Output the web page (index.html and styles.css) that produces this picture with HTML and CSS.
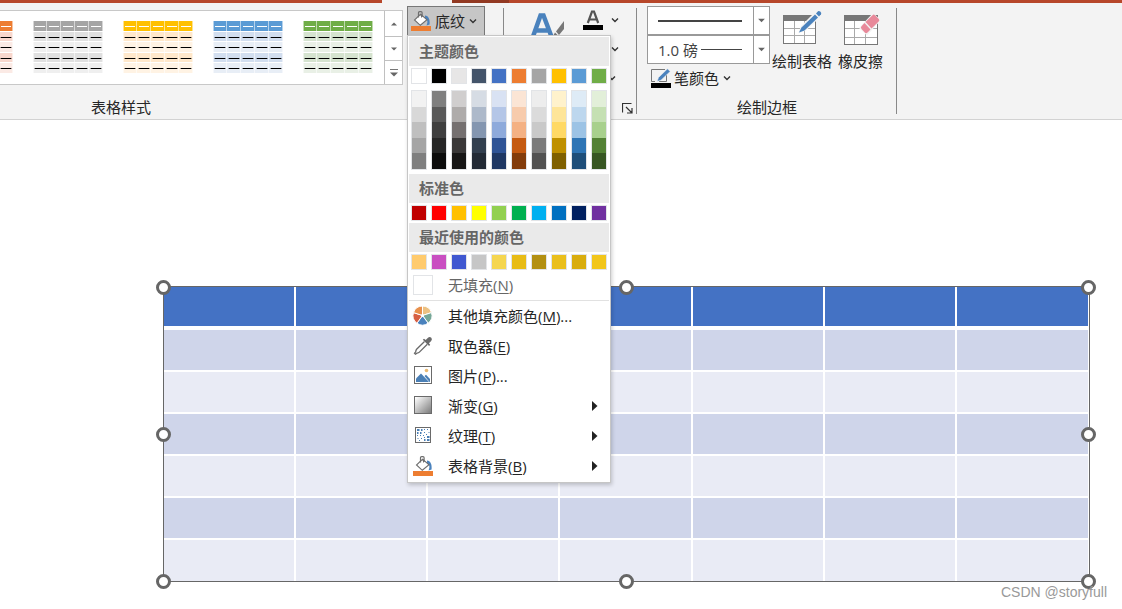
FILE: index.html
```html
<!DOCTYPE html>
<html lang="zh-CN">
<head>
<meta charset="utf-8">
<title>表格设计</title>
<link rel="stylesheet" href="styles.css">
</head>
<body>
<svg class="defs" aria-hidden="true">
  <symbol id="thumb" viewBox="0 0 70 52">
    <rect class="t-head" width="70" height="10"/>
    <g class="t-band"><rect y="11" width="70" height="9"/><rect y="32" width="70" height="9"/></g>
    <g class="t-band t-light"><rect y="21" width="70" height="10"/><rect y="42" width="70" height="10"/></g>
    <path d="M.5 0V52M13.500 0V52M27.500 0V52M41.500 0V52M55.500 0V52M69.500 0V52" stroke="#fff" stroke-opacity=".55"/>
    <path d="M2 5.500H70" stroke="#fff" stroke-dasharray="10 4"/>
    <path d="M1 16.500H70M1 26.500H70M1 37.500H70M1 47.500H70" stroke="#000" stroke-opacity=".35" stroke-dasharray="12 2"/>
    <path d="M2 16.500H70M2 26.500H70M2 37.500H70M2 47.500H70" stroke="#000" stroke-dasharray="10 4"/>
  </symbol>
  <symbol id="chevron" viewBox="0 0 10 10"><path d="M2 3.500 5 6.500 8 3.500" fill="none" stroke="#333" stroke-width="1.400"/></symbol>
  <symbol id="bucket" viewBox="0 0 20 20">
    <path d="M14 4.500C17.500 5 19 8 18.600 13.500L15.500 14.500C17.200 11 16.500 8.500 14 7Z" fill="#4a82bd"/>
    <path d="M9.500 3.200 16 8.800 9.300 14.300 3.500 9Z" fill="#fff" stroke="#6e6e6e" stroke-width="1.100"/>
    <path d="M7.500 6.500V1.800Q7.500.7 8.600.7H10Q11.100.7 11.100 1.800V6" fill="none" stroke="#6e6e6e" stroke-width="1.200"/>
    <path d="M8.500 4.600 10.500 3.600V6.500" fill="none" stroke="#6e6e6e"/>
    <rect y="15" width="20" height="5" fill="#ed7d31"/>
  </symbol>
</svg>

<div class="tabstrip"><span class="tab-left"></span><span class="tab-active"></span><span class="tab-right"></span></div>

<header class="ribbon">
  <section class="group group-styles">
    <div class="gallery">
      <div class="thumbs">
        <button class="thumb orange" aria-label="样式 橙色"><svg><use href="#thumb"/></svg></button>
        <button class="thumb gray" aria-label="样式 灰色"><svg><use href="#thumb"/></svg></button>
        <button class="thumb gold" aria-label="样式 金色"><svg><use href="#thumb"/></svg></button>
        <button class="thumb blue" aria-label="样式 蓝色"><svg><use href="#thumb"/></svg></button>
        <button class="thumb green" aria-label="样式 绿色"><svg><use href="#thumb"/></svg></button>
      </div>
      <div class="spinner">
        <button aria-label="上一行"><svg viewBox="0 0 8 8"><path d="M1 5.500 4 2.500 7 5.500Z" fill="#666"/></svg></button>
        <button aria-label="下一行"><svg viewBox="0 0 8 8"><path d="M1 2.500 4 5.500 7 2.500Z" fill="#666"/></svg></button>
        <button aria-label="其他"><svg viewBox="0 0 8 8"><path d="M0 .5H8" stroke="#777"/><path d="M0 3.500H8L4 7.500Z" fill="#666"/></svg></button>
      </div>
    </div>
    <h2 class="group-label">表格样式</h2>
  </section>

  <section class="group group-shading">
    <div class="dropdown">
      <button class="shading-btn" aria-haspopup="menu" aria-expanded="true">
        <svg class="icon"><use href="#bucket"/></svg><span>底纹</span><svg class="chev"><use href="#chevron"/></svg>
      </button>
      <div class="menu">
        <h3>主题颜色</h3>
        <div class="swatches" data-set="theme"></div>
        <div class="swatches tints" data-set="tints"></div>
        <h3>标准色</h3>
        <div class="swatches" data-set="standard"></div>
        <h3>最近使用的颜色</h3>
        <div class="swatches recent" data-set="recent"></div>
        <button class="item nofill"><span class="nofill-box"></span><span>无填充(<u>N</u>)</span></button>
        <button class="item">
          <svg class="icon" viewBox="0 0 20 20">
            <g stroke="#fff" stroke-width="1">
              <path d="M9.500 9.500V0A9.500 9.500 0 0 1 18.500 6.600Z" fill="#ecc182"/>
              <path d="M9.500 9.500 18.500 6.600A9.500 9.500 0 0 1 15.100 17.200Z" fill="#76a797"/>
              <path d="M9.500 9.500 15.100 17.200A9.500 9.500 0 0 1 3.900 17.200Z" fill="#4a82bd"/>
              <path d="M9.500 9.500 3.900 17.200A9.500 9.500 0 0 1 .5 6.600Z" fill="#d65f43"/>
              <path d="M9.500 9.500 .5 6.600A9.500 9.500 0 0 1 9.500 0Z" fill="#e8904c"/>
            </g>
            <circle cx="9.500" cy="9.500" r="1.500" fill="#fff"/>
          </svg><span>其他填充颜色(<u>M</u>)...</span></button>
        <button class="item">
          <svg class="icon" viewBox="0 0 20 20">
            <path d="M11.500 5.500 3.600 13.300Q2.800 14.200 2.700 15.800L1.500 17.300 2.400 18.200 4 17.200Q5.600 17 6.400 16.100L14.300 8.200" fill="#fff" stroke="#6a6a6a" stroke-width="1.300"/>
            <path d="M9.800 3.800 11 2.700 12.700 4 15 1.700Q16.800.3 18.300 1.800 19.600 3.300 18.200 5L15.900 7.200 17.200 8.800 16.100 10Z" fill="#6a6a6a"/>
          </svg><span>取色器(<u>E</u>)</span></button>
        <button class="item">
          <svg class="icon" viewBox="0 0 20 20">
            <rect x="1.500" y=".5" width="17" height="17" fill="#fff" stroke="#6a6a6a"/>
            <circle cx="13.500" cy="4.500" r="1.800" fill="#e9b973"/>
            <path d="M3 16V12.500L8 7.500 16 16Z" fill="#4a7fb5"/><path d="M11.500 10 13 8.700 17 13V16H16.500Z" fill="#4a7fb5"/>
          </svg><span>图片(<u>P</u>)...</span></button>
        <button class="item">
          <svg class="icon" viewBox="0 0 20 20">
            <defs><linearGradient id="gr" x2="1" y2="1"><stop offset=".05" stop-color="#fff"/><stop offset="1" stop-color="#777"/></linearGradient></defs>
            <rect x="1.500" y=".5" width="17" height="17" fill="url(#gr)" stroke="#6a6a6a"/>
          </svg><span>渐变(<u>G</u>)</span><svg class="arrow" viewBox="0 0 6 10"><path d="M0 0 5.500 5 0 10Z"/></svg></button>
        <button class="item">
          <svg class="icon" viewBox="0 0 20 20">
            <g transform="translate(0 -1)">
            <rect x="2.500" y="2.500" width="15" height="15" fill="#fff" stroke="#6a6a6a"/>
            <path d="M4 5H6.500M8 5H9.500M4 8H5.500M7 8H8.500M11 15H12.500M14 15H16.500M14 12H16.500" stroke="#4a7fb5" stroke-width="2"/>
            <path d="M11 4.500H12M14 4.500H15M11 7.500H12M15.500 7.500H16.500M4 10.500H5M7 10.500H8M10 10.500H11M13 9.500H14M4.500 13.500H5.500M8 13.500H9M11 12.500H12M6 15.500H7" stroke="#4a7fb5"/>
            </g>
          </svg><span>纹理(<u>T</u>)</span><svg class="arrow" viewBox="0 0 6 10"><path d="M0 0 5.500 5 0 10Z"/></svg></button>
        <button class="item"><svg class="icon"><use href="#bucket"/></svg><span>表格背景(<u>B</u>)</span><svg class="arrow" viewBox="0 0 6 10"><path d="M0 0 5.500 5 0 10Z"/></svg></button>
      </div>
    </div>
  </section>

  <section class="group group-wordart">
    <div class="wordart-row">
      <button class="quick" aria-label="快速样式">
        <svg viewBox="0 0 36 30">
          <path d="M2.500 26 10.500 3.500H13.500L22 26M6 18.500H18" fill="none" stroke="#4a82bd" stroke-width="4.500"/>
          <path d="M34 9V17L29 23 26 19.500Z" fill="#777"/><path d="M25 20.500 28.500 24Q26 28 20 27.500 23 25 25 20.500Z" fill="#777"/>
        </svg>
      </button>
      <div class="text-tools">
        <button aria-label="文本填充">
          <svg class="icon" viewBox="0 0 20 20"><path d="M4.800 13 9 1.500H11L15.200 13M6.500 9.500H13.500" fill="none" stroke="#555" stroke-width="2.200"/><rect y="15" width="20" height="5" fill="#000"/></svg>
          <svg class="chev"><use href="#chevron"/></svg>
        </button>
        <button aria-label="文本轮廓"><span class="icon"></span><svg class="chev"><use href="#chevron"/></svg></button>
        <button aria-label="文字效果"><span class="icon narrow"></span><svg class="chev"><use href="#chevron"/></svg></button>
      </div>
    </div>
    <button class="launcher" aria-label="更多选项"><svg viewBox="0 0 11 11"><path d="M.5 9.500V.5H9.500M4 4 9.500 9.500M10 5V10H5" fill="none" stroke="#333" stroke-width="1.200"/></svg></button>
  </section>

  <section class="group group-borders">
    <div class="border-tools">
      <div class="pens">
        <div class="combo">
          <select aria-label="笔样式"><option aria-label="实线"></option></select>
          <span class="pen-line thick"></span>
          <svg class="combo-arrow" viewBox="0 0 8 8"><path d="M1 2.500H7L4 5.500Z"/></svg>
        </div>
        <div class="combo">
          <select aria-label="笔划粗细"><option>1.0 磅</option></select>
          <span class="pen-line thin"></span>
          <svg class="combo-arrow" viewBox="0 0 8 8"><path d="M1 2.500H7L4 5.500Z"/></svg>
        </div>
        <button class="pen-color">
          <svg class="icon" viewBox="0 0 20 20"><path d="M14 1.500H.5V13.500H4M15.500 7V13.500H8" fill="none" stroke="#777"/><path d="M6 13.500 7.500 9.500 16.500.8 19.200 3.500 10 12.200Z" fill="#4a82bd" stroke="#f3f3f3" stroke-width=".6"/><rect y="15" width="20" height="5" fill="#000"/></svg>
          <span>笔颜色</span><svg class="chev"><use href="#chevron"/></svg>
        </button>
      </div>
      <button class="big">
        <svg viewBox="0 0 40 36">
          <rect x="1.500" y="5.500" width="32" height="28" fill="#fff" stroke="#777"/><rect x="1" y="5" width="33" height="6" fill="#777"/>
          <path d="M12.500 11V33M22.500 11V33M2 18.500H33M2 25.500H33" stroke="#aaa"/>
          <path d="M16 23.500 19 16 34.500.5 40 5.500 24 20.500Z" fill="#f3f3f3"/>
          <path d="M17 22.500 19.500 17.500 33 4.500 36 7.500 22.500 20.500Z" fill="#4a82bd"/><path d="M34 3.500 36 1.200Q37 .4 38.500 1.700 39.800 3 39 4.200L37 6.500Z" fill="#4a82bd"/>
        </svg><span>绘制表格</span>
      </button>
      <button class="big">
        <svg viewBox="0 0 40 36">
          <rect x="3.500" y="5.500" width="33" height="29" fill="#fff" stroke="#777"/><rect x="3" y="5" width="34" height="6" fill="#777"/>
          <path d="M13.500 11V34M24.500 11V34M4 18.500H36M4 27.500H36" stroke="#aaa"/>
          <path d="M18 18 32 3 40 10 26 25.500Z" fill="#f3f3f3"/>
          <path d="M24.500 12 31.500 5.200Q32.800 4 34 5.200L37.800 9Q39 10.200 37.700 11.500L30.500 18.500Z" fill="#e8899a"/>
          <path d="M23.500 13 29.500 19.500 26.500 22.500Q25 23.800 23.800 22.500L20.500 19Q19.300 17.500 20.500 16.200Z" fill="#e8899a"/>
        </svg><span>橡皮擦</span>
      </button>
    </div>
    <h2 class="group-label">绘制边框</h2>
  </section>
</header>

<main class="canvas">
  <div class="selection">
    <table class="slide-table" aria-label="表格">
      <thead><tr><th></th><th></th><th></th><th></th><th></th><th></th><th></th></tr></thead>
      <tbody>
        <tr><td></td><td></td><td></td><td></td><td></td><td></td><td></td></tr>
        <tr><td></td><td></td><td></td><td></td><td></td><td></td><td></td></tr>
        <tr><td></td><td></td><td></td><td></td><td></td><td></td><td></td></tr>
        <tr><td></td><td></td><td></td><td></td><td></td><td></td><td></td></tr>
        <tr><td></td><td></td><td></td><td></td><td></td><td></td><td></td></tr>
        <tr><td></td><td></td><td></td><td></td><td></td><td></td><td></td></tr>
      </tbody>
    </table>
    <i class="handle top left"></i><i class="handle top center"></i><i class="handle top right"></i>
    <i class="handle middle left"></i><i class="handle middle right"></i>
    <i class="handle bottom left"></i><i class="handle bottom center"></i><i class="handle bottom right"></i>
  </div>
  <p class="watermark">CSDN @storyfull</p>
</main>
<script src="swatches.js"></script>
</body>
</html>
```
FILE: styles.css
```css
* { box-sizing: border-box; }

body {
  margin: 0;
  min-height: 100vh;
  display: flex;
  flex-direction: column;
  background: #fff;
  color: #262626;
  font: 15px/20px "Open Sans", "Noto Sans CJK SC", sans-serif;
}

button {
  margin: 0;
  padding: 0;
  border: 0;
  background: none;
  color: inherit;
  font: inherit;
  text-align: left;
}

svg { display: block; }
h2, h3, p { margin: 0; font: inherit; }
.defs { position: absolute; width: 0; height: 0; }
.icon { flex: none; width: 20px; height: 20px; overflow: visible; }
.chev { flex: none; width: 10px; height: 10px; }

/* Title strip */
.tabstrip { display: flex; height: 3px; background: #f3f3f3; }
.tab-left { width: 382px; margin-right: 70px; background: #b7472a; }
.tab-active { width: 57px; background: #923922; }
.tab-right { flex: 1; background: #b7472a; }

/* Ribbon */
.ribbon {
  display: flex;
  height: 117px;
  background: #f3f3f3;
  border-bottom: 1px solid #d2d2d2;
}
.group { display: flex; flex-direction: column; justify-content: space-between; padding-bottom: 2px; }
.group-label { text-align: center; white-space: nowrap; }

.group-styles { width: 404px; padding-top: 7px; }
.group-styles .group-label { padding-left: 91px; text-align: left; }
.gallery { display: flex; height: 75px; margin-right: 1px; background: #fff; border: 1px solid #c8c8c8; border-left: 0; }
.thumbs { flex: 1; display: flex; justify-content: flex-end; align-items: flex-start; gap: 20px; padding: 10px 11px 0 0; overflow: hidden; }
.thumb { flex: none; }
.thumb svg { width: 70px; height: 52px; }
.t-head { fill: var(--head); }
.t-band { fill: var(--band); }
.t-light { opacity: .5; }
.orange { --head: #ed7d31; --band: #f8d7cd; }
.gray { --head: #a5a5a5; --band: #e0e0e0; }
.gold { --head: #ffc000; --band: #ffe8cb; }
.blue { --head: #5b9bd5; --band: #d2deef; }
.green { --head: #70ad47; --band: #d5e3cf; }
.spinner { display: grid; grid-template-rows: 25px 24px 1fr; width: 18px; border-left: 1px solid #c0c0c0; }
.spinner button { display: grid; place-items: center; }
.spinner button + button { border-top: 1px solid #c0c0c0; }
.spinner svg { width: 8px; height: 8px; }

.group-shading { width: 99px; padding: 3px 0 0 3px; }
.dropdown { position: relative; align-self: flex-start; }
.shading-btn { display: flex; align-items: center; height: 30px; padding: 0 6px 0 3px; background: #c6c6c6; border: 1px solid #777; }
.shading-btn span { margin: 0 3px 0 4px; }

/* Shading menu */
.menu {
  position: absolute;
  z-index: 2;
  top: 29px;
  left: 0;
  width: 204px;
  padding: 1px;
  background: #fff;
  border: 1px solid #c6c6c6;
  box-shadow: 1px 2px 4px rgba(0, 0, 0, .2);
}
.menu h3 { padding-left: 10px; background: #eaeaea; color: #666; font-weight: 700; line-height: 29px; }
.swatches { display: grid; grid-template-columns: repeat(10, 16px); gap: 4px; padding: 2px; }
.swatch { height: 16px; border: 1px solid #e2e4e7; }
.tints { padding: 4px 2px; }
.recent { padding-bottom: 0; }
.tint-column { display: grid; grid-template-rows: repeat(5, 1fr); height: 80px; border: 1px solid #e2e4e7; }
.item { display: flex; align-items: center; width: 100%; height: 30px; padding: 0 11px 0 4px; }
.item span:nth-child(2) { flex: 1; margin-left: 15px; white-space: nowrap; }
.item u { text-underline-offset: 2px; }
.nofill { height: 31px; border-bottom: 1px solid #e1e1e1; color: #666; }
.nofill-box { width: 20px; height: 20px; border: 1px solid #e2e4e7; }
.arrow { width: 6px; height: 10px; fill: #222; }

/* Text tools */
.group-wordart { width: 134px; margin: 5px 0; padding: 0; border-left: 1px solid #888; border-right: 1px solid #888; }
.wordart-row { display: flex; justify-content: space-between; align-items: flex-start; padding: 1px 16px 0 26px; }
.quick svg { width: 36px; height: 30px; margin-top: 3px; }
.text-tools { display: grid; gap: 9px; padding-top: 1px; }
.text-tools button { display: flex; align-items: center; gap: 7px; }
.text-tools .narrow { width: 17px; }
.launcher { align-self: flex-end; margin-right: 3px; }
.launcher svg { width: 11px; height: 11px; }

/* Border tools */
.group-borders { position: relative; width: 260px; padding-top: 3px; }
.group-borders::after { content: ""; position: absolute; top: 5px; right: 0; bottom: 5px; border-right: 1px solid #888; }
.border-tools { display: flex; align-items: flex-start; padding-left: 10px; }
.pens { width: 123px; }
.combo { display: grid; grid-template-columns: 1fr 17px; align-items: center; height: 29px; background: #fff; border: 1px solid #999; }
.combo select {
  grid-area: 1 / 1 / 2 / 3;
  appearance: none;
  width: 100%;
  height: 100%;
  padding: 0 0 0 10px;
  border: 0;
  background: none;
  color: #444;
  font: inherit;
}
.pen-line { grid-area: 1 / 1; margin: 0 10px; background: #444; pointer-events: none; }
.thick { height: 2px; }
.thin { height: 1px; margin-left: 53px; }
.combo-arrow { grid-area: 1 / 2; width: 16px; height: 100%; padding: 0 3px; border-left: 1px solid #999; fill: #666; pointer-events: none; justify-self: end; }
.pen-color { display: flex; align-items: center; height: 28px; padding-left: 4px; white-space: nowrap; }
.pen-color span { margin: 0 3px; }
.big { display: flex; flex-direction: column; align-items: center; gap: 5px; margin: 4px 0 0 2px; white-space: nowrap; }
.big + .big { margin-left: 6px; }
.big svg { width: 40px; height: 36px; }

/* Slide */
.canvas { position: relative; flex: 1; padding: 166px 32px 27px 163px; }
.selection { position: relative; border: 1px solid #666; }
.slide-table { width: 100%; table-layout: fixed; border-collapse: separate; border-spacing: 0; }
.slide-table th, .slide-table td { height: 42px; padding: 0; border: solid #fff; border-width: 0 2px 2px 0; background: #e9ebf5; }
.slide-table th { height: 43px; border-bottom-width: 4px; background: #4472c4; }
.slide-table tbody tr:nth-child(odd) td { background: #cfd5ea; }
.slide-table tr > :last-child { border-right-width: 1px; }
.slide-table tbody tr:last-child td { height: 41px; border-bottom: 0; }
.handle { position: absolute; width: 15px; height: 15px; margin: -7px -8px; border: 3px solid #666; border-radius: 50%; background: #fff; }
.top { top: 0; }
.middle { top: 50%; }
.bottom { top: 100%; }
.left { left: 0; }
.center { left: 50%; }
.right { left: 100%; }
.watermark { position: absolute; right: 15px; bottom: 7px; color: #999; font: 14px/20px "Liberation Sans", sans-serif; }
```
FILE: swatches.js
```js
const palettes = {
  theme: ['#ffffff', '#000000', '#e7e6e6', '#44546a', '#4472c4', '#ed7d31', '#a5a5a5', '#ffc000', '#5b9bd5', '#70ad47'],
  standard: ['#c00000', '#ff0000', '#ffc000', '#ffff00', '#92d050', '#00b050', '#00b0f0', '#0070c0', '#002060', '#7030a0'],
  recent: ['#ffcb6e', '#c94fc1', '#4058d0', '#c6c6c6', '#f5d650', '#e8bc16', '#b39012', '#eabf1c', '#d9ad0e', '#f2c61b'],
};

const tints = [
  ['#f2f2f2', '#d8d8d8', '#bfbfbf', '#a5a5a5', '#7f7f7f'],
  ['#7f7f7f', '#595959', '#3f3f3f', '#262626', '#0c0c0c'],
  ['#d0cece', '#aeabaa', '#757070', '#3a3838', '#171616'],
  ['#d6dce4', '#adb9ca', '#8496b0', '#323f4f', '#222a35'],
  ['#d9e2f3', '#b4c6e7', '#8eaadb', '#2f5496', '#1f3864'],
  ['#fbe5d5', '#f7cbac', '#f4b183', '#c55a11', '#833c0b'],
  ['#ededed', '#dbdbdb', '#c9c9c9', '#7b7b7b', '#525252'],
  ['#fff2cc', '#fee599', '#ffd965', '#bf9000', '#7f6000'],
  ['#deebf6', '#bdd7ee', '#9cc3e5', '#2e75b5', '#1e4e79'],
  ['#e2efd9', '#c5e0b3', '#a8d08d', '#538135', '#375623'],
];

function makeSwatch(color, className) {
  const button = document.createElement('button');
  button.className = className;
  button.style.background = color;
  button.setAttribute('aria-label', color);
  return button;
}

for (const [name, colors] of Object.entries(palettes)) {
  const row = document.querySelector(`[data-set="${name}"]`);
  colors.forEach((color) => row.append(makeSwatch(color, 'swatch')));
}

const tintRow = document.querySelector('[data-set="tints"]');
tints.forEach((shades) => {
  const column = document.createElement('div');
  column.className = 'tint-column';
  shades.forEach((color) => column.append(makeSwatch(color, 'tint')));
  tintRow.append(column);
});
```
